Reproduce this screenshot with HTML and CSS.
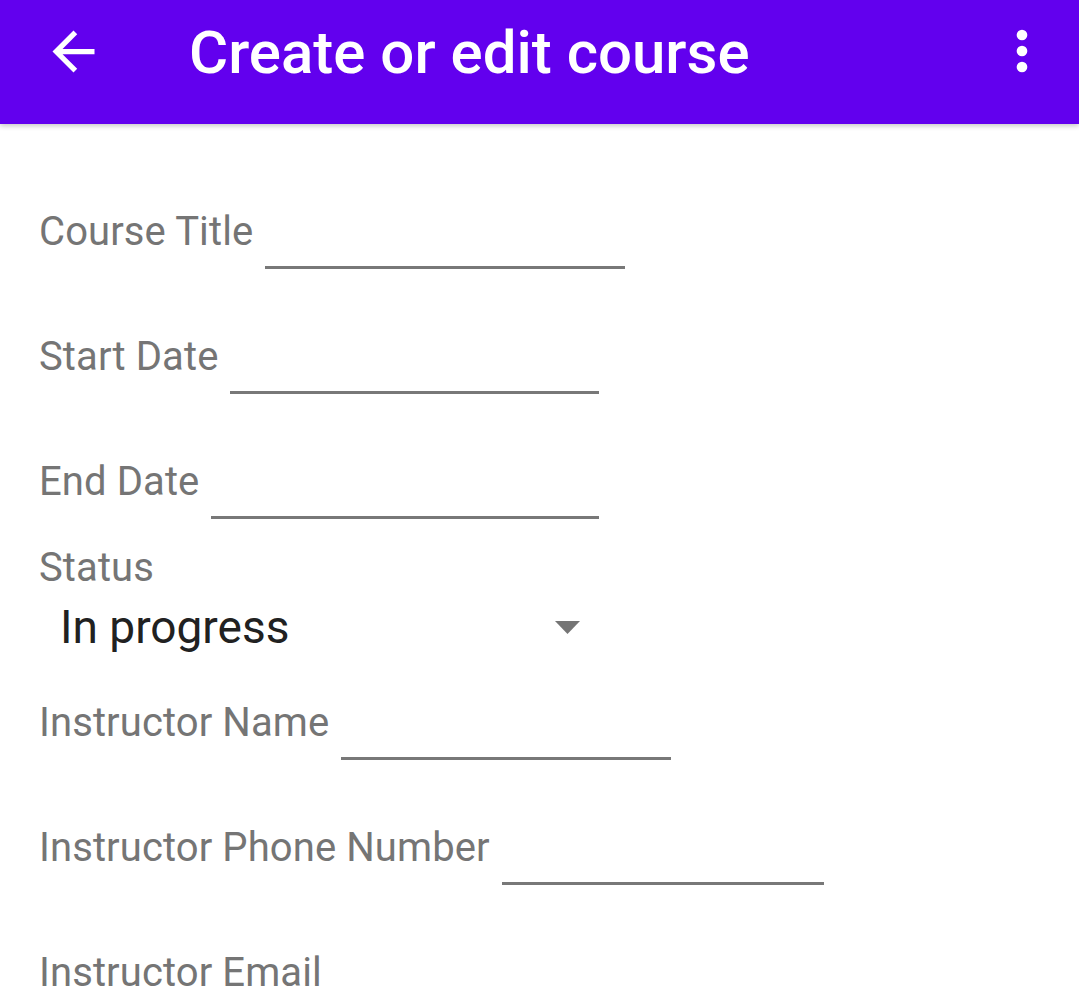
FILE: index.html
```html
<!DOCTYPE html>
<html lang="en">
<head>
<meta charset="utf-8">
<title>Create or edit course</title>
<link rel="stylesheet" href="styles.css">
</head>
<body>
<header class="appbar">
  <svg class="icon back" viewBox="0 0 24 24" aria-hidden="true"><path d="M20 11H7.83l5.59-5.59L12 4l-8 8 8 8 1.41-1.41L7.83 13H20v-2z" fill="#fff"/></svg>
  <h1 class="title">Create or edit course</h1>
  <svg class="icon menu" viewBox="0 0 24 24" aria-hidden="true"><circle cx="12" cy="6" r="2" fill="#fff"/><circle cx="12" cy="12" r="2" fill="#fff"/><circle cx="12" cy="18" r="2" fill="#fff"/></svg>
</header>
<main class="form">
  <div class="row r-first"><span class="label">Course Title</span><span class="field w-title"></span></div>
  <div class="row r-gap"><span class="label">Start Date</span><span class="field w-start"></span></div>
  <div class="row r-gap"><span class="label">End Date</span><span class="field w-end"></span></div>
  <div class="status-label label">Status</div>
  <div class="spinner"><span class="spinner-text">In progress</span><svg class="caret" viewBox="0 0 25 13" aria-hidden="true"><path d="M0 0h25L12.5 13z" fill="#757575"/></svg></div>
  <div class="row r-after-spinner"><span class="label">Instructor Name</span><span class="field w-name"></span></div>
  <div class="row r-gap"><span class="label">Instructor Phone Number</span><span class="field w-phone"></span></div>
  <div class="row r-gap"><span class="label">Instructor Email</span><span class="field w-email"></span></div>
</main>
</body>
</html>
```
FILE: styles.css
```css
* { box-sizing: border-box; }
html, body { margin: 0; padding: 0; background: #fff; }
body { font-family: Roboto, "Noto Sans", sans-serif; width: 1079px; height: 1000px; overflow: hidden; }

.appbar {
  height: 124px;
  background: #6200ee;
  display: flex;
  align-items: flex-start;
  box-shadow: 0 2px 5px rgba(0,0,0,0.22);
  position: relative;
  z-index: 1;
}
.icon { display: block; flex: none; }
.back { width: 63px; height: 63px; margin-left: 42px; margin-top: 20px; }
.title {
  margin: 21px 0 0 84px;
  font-size: 60px;
  line-height: 64px;
  font-weight: 500;
  color: #fff;
  letter-spacing: 0;
}
.menu { width: 64px; height: 64px; margin-left: auto; margin-right: 25px; margin-top: 19px; }

.form { padding-left: 39px; padding-top: 84px; }

.label {
  font-size: 40px;
  line-height: 48px;
  color: #757575;
  letter-spacing: 0.1px;
}
.row { display: flex; align-items: flex-end; }
.row .label { margin-bottom: 13px; }
.r-gap { margin-top: 64px; }
.r-after-spinner { margin-top: 46px; }
.field {
  display: block;
  height: 30px;
  margin-left: 12px;
  border-bottom: 3px solid #787878;
}
.w-title { width: 360px; }
.w-start { width: 369px; }
.w-end { width: 388px; }
.w-name { width: 330px; }
.w-phone { width: 322px; }
.w-email { width: 330px; }

.status-label { margin-top: 25px; }
.spinner {
  margin-top: 9px;
  width: 541px;
  padding-left: 21px;
  display: flex;
  align-items: center;
  justify-content: space-between;
}
.spinner-text { font-size: 46px; line-height: 52px; color: #212121; }
.caret { width: 25px; height: 13px; display: block; }
```
